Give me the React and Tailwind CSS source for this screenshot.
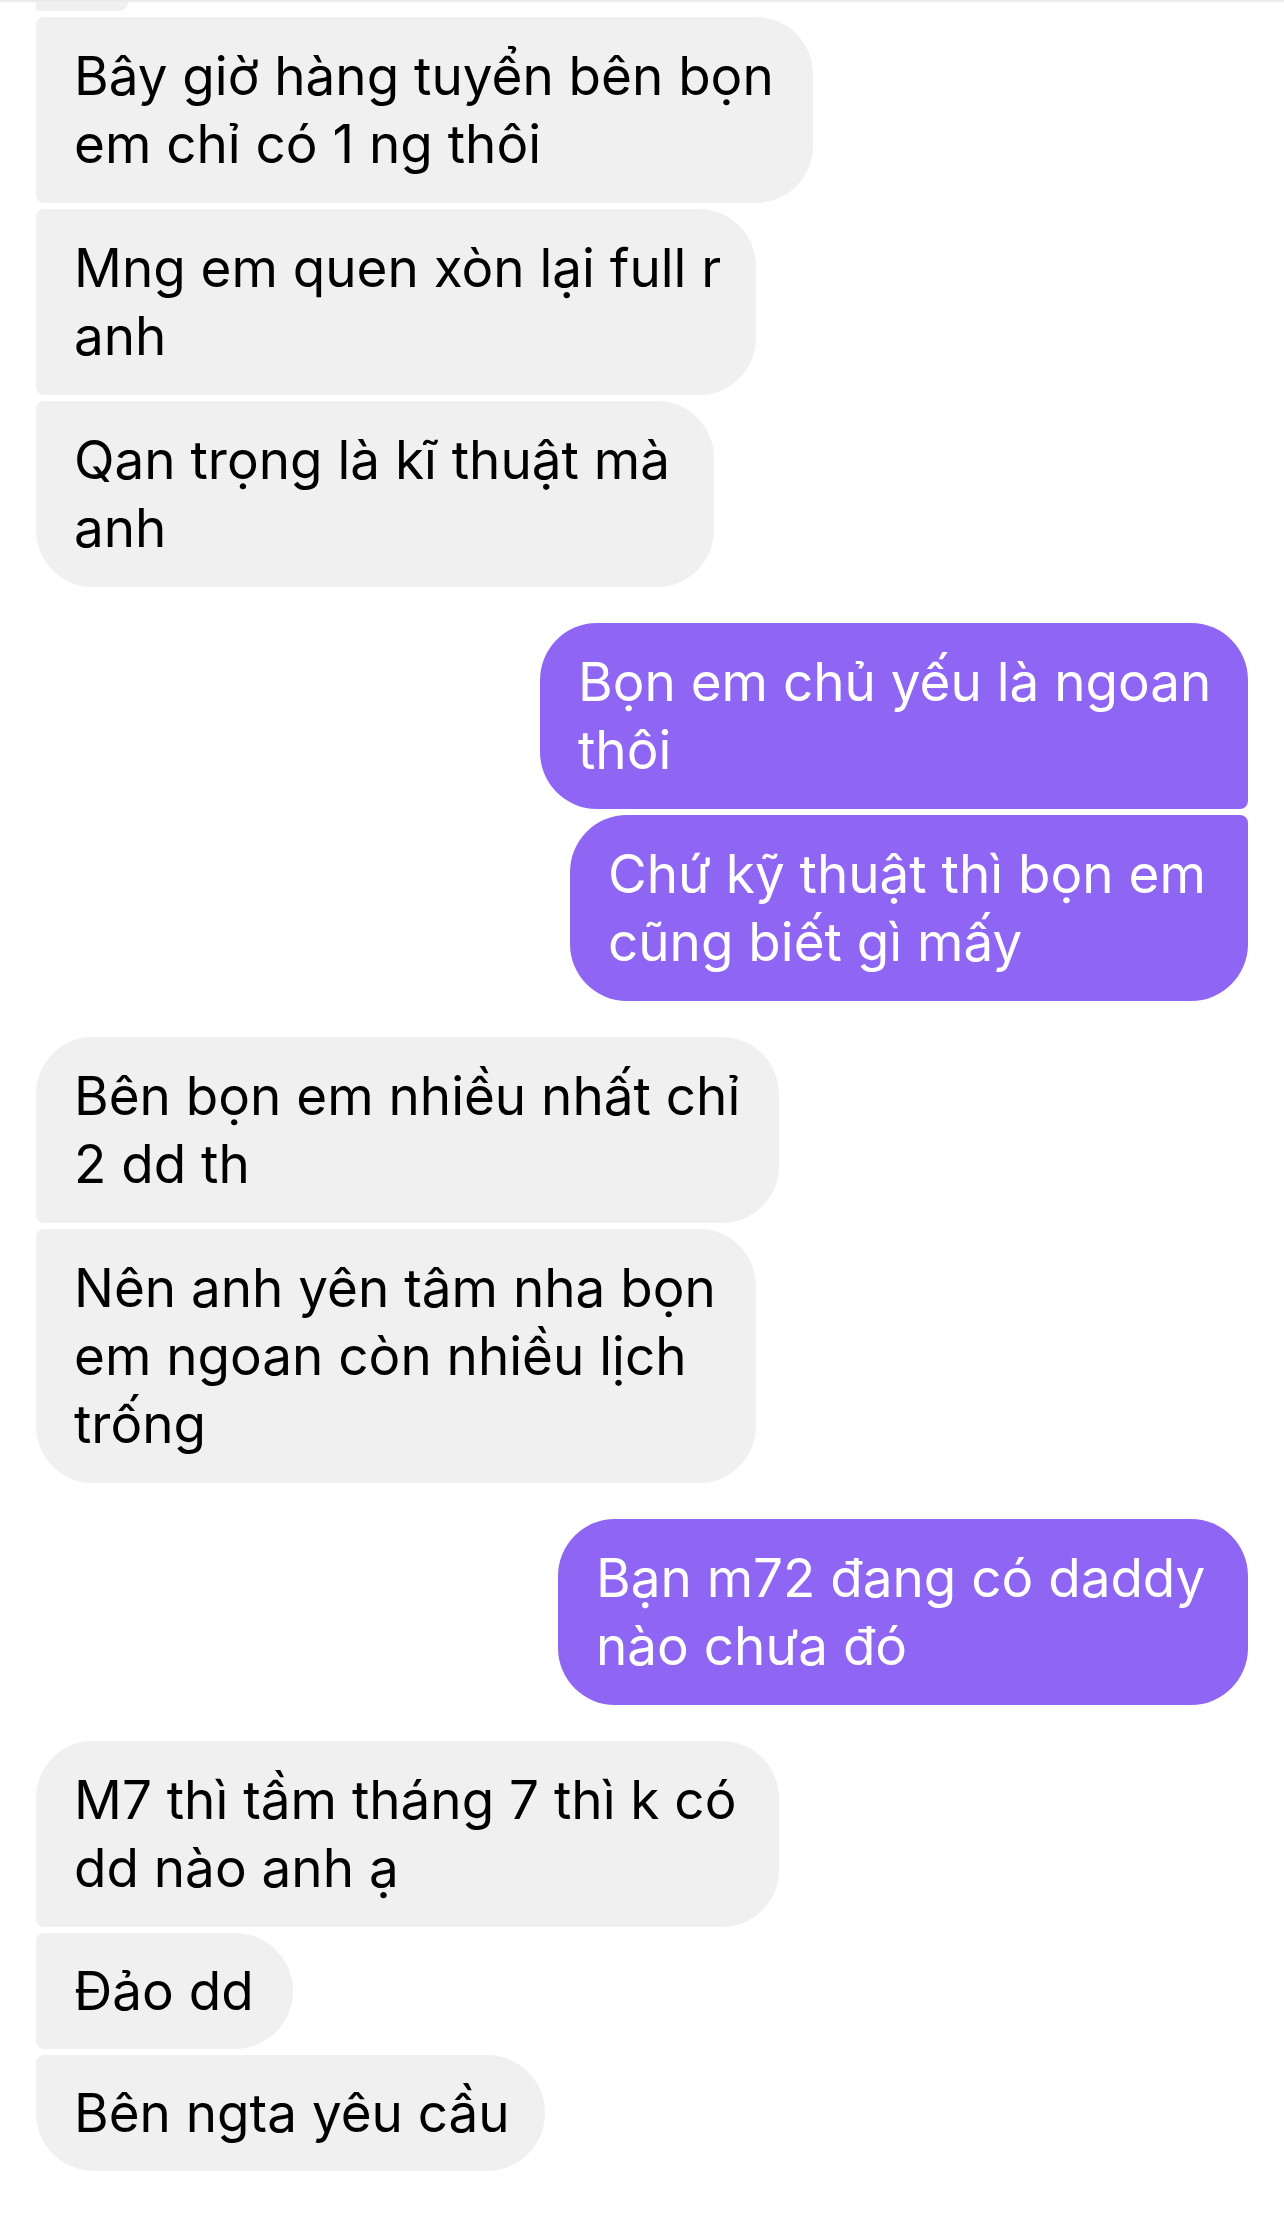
const groups = [
  {
    side: 'in',
    items: [
      { w: 'w-[777px]', r: 'rounded-tl-[8px] rounded-bl-[8px] rounded-tr-[57px] rounded-br-[57px]', lines: ['Bây giờ hàng tuyển bên bọn', 'em chỉ có 1 ng thôi'] },
      { w: 'w-[720px]', r: 'rounded-tl-[8px] rounded-bl-[8px] rounded-tr-[57px] rounded-br-[57px]', lines: ['Mng em quen xòn lại full r', 'anh'] },
      { w: 'w-[678px]', r: 'rounded-tl-[8px] rounded-bl-[57px] rounded-tr-[57px] rounded-br-[57px]', lines: ['Qan trọng là kĩ thuật mà', 'anh'] },
    ],
  },
  {
    side: 'out',
    items: [
      { w: 'w-[708px]', r: 'rounded-tl-[57px] rounded-bl-[57px] rounded-tr-[57px] rounded-br-[8px]', lines: ['Bọn em chủ yếu là ngoan', 'thôi'] },
      { w: 'w-[678px]', r: 'rounded-tl-[57px] rounded-bl-[57px] rounded-tr-[8px] rounded-br-[57px]', lines: ['Chứ kỹ thuật thì bọn em', 'cũng biết gì mấy'] },
    ],
  },
  {
    side: 'in',
    items: [
      { w: 'w-[743px]', r: 'rounded-tl-[57px] rounded-bl-[8px] rounded-tr-[57px] rounded-br-[57px]', lines: ['Bên bọn em nhiều nhất chỉ', '2 dd th'] },
      { w: 'w-[720px]', r: 'rounded-tl-[8px] rounded-bl-[57px] rounded-tr-[57px] rounded-br-[57px]', lines: ['Nên anh yên tâm nha bọn', 'em ngoan còn nhiều lịch', 'trống'] },
    ],
  },
  {
    side: 'out',
    items: [
      { w: 'w-[690px]', r: 'rounded-[57px]', lines: ['Bạn m72 đang có daddy', 'nào chưa đó'] },
    ],
  },
  {
    side: 'in',
    items: [
      { w: 'w-[743px]', r: 'rounded-tl-[57px] rounded-bl-[8px] rounded-tr-[57px] rounded-br-[57px]', lines: ['M7 thì tầm tháng 7 thì k có', 'dd nào anh ạ'] },
      { w: 'w-[257px]', r: 'rounded-tl-[8px] rounded-bl-[8px] rounded-tr-[58px] rounded-br-[58px]', lines: ['Đảo dd'] },
      { w: 'w-[509px]', r: 'rounded-tl-[8px] rounded-bl-[58px] rounded-tr-[58px] rounded-br-[58px]', lines: ['Bên ngta yêu cầu'] },
    ],
  },
]

function Bubble({ item, side }) {
  const single = item.lines.length === 1
  return (
    <div
      className={`${item.w} ${item.r} ${single ? 'py-[24px]' : 'py-[25px]'} pl-[38px] pr-[40px] ${
        side === 'out' ? 'self-end bg-[#8f65f3] text-white' : 'self-start bg-[#f0f0f0] text-black'
      }`}
    >
      {item.lines.map((line, i) => (
        <div key={i} className="whitespace-nowrap text-[53px] leading-[68px]">
          {line}
        </div>
      ))}
    </div>
  )
}

export default function App() {
  return (
    <div className="w-[1284px] h-[2219px] bg-white overflow-hidden font-['Inter','Noto_Sans',sans-serif]">
      <div className="h-[2px] bg-[#ebebeb]" />
      {/* bottom of the previous, cut-off bubble */}
      <div className="ml-[36px] h-[9px] w-[92px] bg-[#f0f0f0] rounded-bl-[8px] rounded-br-[40px]" />
      <div className="mt-[6px] px-[36px] flex flex-col gap-[36px]">
        {groups.map((g, gi) => (
          <div key={gi} className="flex flex-col gap-[6px]">
            {g.items.map((item, i) => (
              <Bubble key={i} item={item} side={g.side} />
            ))}
          </div>
        ))}
      </div>
    </div>
  )
}
